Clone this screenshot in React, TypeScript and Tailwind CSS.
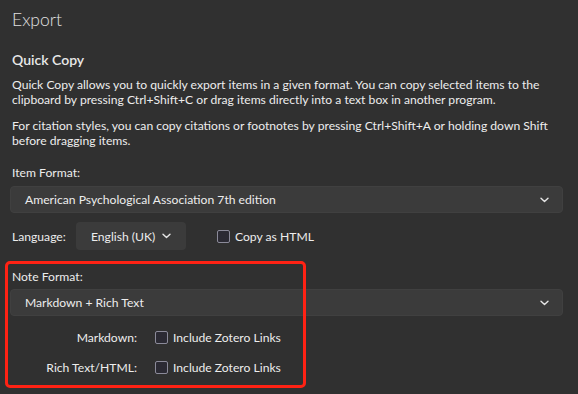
import React from 'react';

// Small chevron used inside the menulists
function Chevron() {
  return (
    <svg width="9" height="6" viewBox="0 0 9 6" fill="none" className="shrink-0">
      <path d="M1 1.2 L4.5 4.6 L8 1.2" stroke="#e6e6e6" strokeWidth="1.4" strokeLinecap="round" strokeLinejoin="round" />
    </svg>
  );
}

function Checkbox({ label }: { label: string }) {
  return (
    <label className="flex items-center gap-[5px] whitespace-nowrap">
      <span className="block w-[13px] h-[13px] rounded-[2px] border-[1.5px] border-[#8b8a99] bg-[#2b2a33]" />
      <span>{label}</span>
    </label>
  );
}

function Select({ value, className = '' }: { value: string; className?: string }) {
  return (
    <div
      className={
        'flex items-center justify-between h-[27px] rounded-[4px] bg-[#3b3b3b] border border-[#404040] pl-[14px] pr-[13px] ' +
        className
      }
    >
      <span>{value}</span>
      <Chevron />
    </div>
  );
}

export default function App() {
  return (
    <div
      className="w-[578px] h-[394px] overflow-hidden bg-[#303030] text-[#ededed] text-[12.15px] leading-[15px] whitespace-nowrap"
      style={{ fontFamily: 'Lato, "Noto Sans", sans-serif' }}
    >
      <div className="px-[12px] pt-[8px]">
        <h1 className="text-[17.5px] leading-[24px] font-light text-[#e0e0e0]">Export</h1>

        <h2 className="mt-[18px] text-[14px] leading-[20px] font-semibold text-[#e8e8e8]">Quick Copy</h2>

        <p className="mt-[7px]">
          Quick Copy allows you to quickly export items in a given format. You can copy selected items to the
          <br />
          clipboard by pressing Ctrl+Shift+C or drag items directly into a text box in another program.
        </p>
        <p className="mt-[11px]">
          For citation styles, you can copy citations or footnotes by pressing Ctrl+Shift+A or holding down Shift
          <br />
          before dragging items.
        </p>

        <div className="mt-[17px]">Item Format:</div>
      </div>

      <div className="px-[10px] mt-[6px]">
        <Select value="American Psychological Association 7th edition" className="w-[553px]" />
      </div>

      <div className="flex items-center mt-[9px] pl-[12px]">
        <span className="w-[64px]">Language:</span>
        <div className="flex items-center h-[28px] w-[110px] rounded-[4px] bg-[#3b3b3b] pl-[15px] pr-[15px] justify-between">
          <span>English (UK)</span>
          <Chevron />
        </div>
        <div className="ml-[31px]">
          <Checkbox label="Copy as HTML" />
        </div>
      </div>

      {/* highlighted note format block */}
      <div className="relative mt-[11px]">
        <div className="absolute left-[5px] top-0 w-[301px] h-[127px] rounded-[5px] border-[3px] border-[#ff2214] pointer-events-none z-10" />
        <div className="pt-[8px] pl-[12px]">Note Format:</div>
        <div className="px-[10px] mt-[5px]">
          <Select value="Markdown + Rich Text" className="w-[553px]" />
        </div>
        <div className="grid grid-cols-[137px_auto] items-center gap-y-[15px] mt-[14px]">
          <span className="text-right">Markdown:</span>
          <div className="pl-[18px]">
            <Checkbox label="Include Zotero Links" />
          </div>
          <span className="text-right">Rich Text/HTML:</span>
          <div className="pl-[18px]">
            <Checkbox label="Include Zotero Links" />
          </div>
        </div>
      </div>
    </div>
  );
}
